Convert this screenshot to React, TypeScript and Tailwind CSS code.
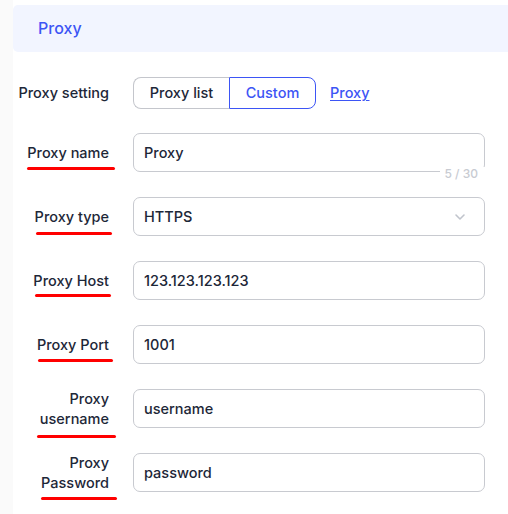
import React from "react";

const rows = [
  { label: ["Proxy name"], value: "Proxy", ul: { l: 27, w: 88, t: 34 }, counter: true },
  { label: ["Proxy type"], value: "HTTPS", ul: { l: 36, w: 76, t: 35 }, select: true },
  { label: ["Proxy Host"], value: "123.123.123.123", ul: { l: 35, w: 76, t: 33 } },
  { label: ["Proxy Port"], value: "1001", ul: { l: 38, w: 75, t: 34 } },
  { label: ["Proxy", "username"], value: "username", ul: { l: 37, w: 79, t: 46 } },
  { label: ["Proxy", "Password"], value: "password", ul: { l: 41, w: 76, t: 44 } },
];

export default function App() {
  return (
    <div
      className="w-[508px] h-[514px] bg-[#fafafa] pl-[13px] overflow-hidden text-[#1d2738]"
      style={{ fontFamily: "Inter, 'Noto Sans', sans-serif" }}
    >
      <div className="bg-white h-full pt-[5px]">
        <div className="h-[47px] rounded-l-[5px] bg-[#f2f5ff] pl-[25px] flex items-center pb-[1px] text-[16px] font-medium text-[#3d55f5]">
          Proxy
        </div>
        <div className="mt-[25px] flex items-center h-[32px]">
          <div className="w-[96px] text-right text-[14.5px] font-medium">Proxy setting</div>
          <div className="ml-[24px] flex h-[32px] text-[14.5px] font-medium">
            <div className="w-[96px] flex items-center justify-center border border-[#c4c6cc] border-r-0 rounded-l-[8px]">
              Proxy list
            </div>
            <div className="w-[87px] flex items-center justify-center border border-[#3d55f5] rounded-r-[8px] text-[#3d55f5]">
              Custom
            </div>
          </div>
          <a className="ml-[14px] text-[14.5px] font-medium text-[#3d55f5] underline underline-offset-2">Proxy</a>
        </div>
        <div className="mt-[24px] flex flex-col gap-[25px]">
          {rows.map((r, i) => (
            <div key={i} className="relative flex items-center h-[39px]">
              <div className="w-[96px] text-right text-[14.5px] font-medium leading-[20px]">
                {r.label.map((l, j) => (
                  <div key={j}>{l}</div>
                ))}
              </div>
              <div className="relative ml-[24px] w-[352px] h-[39px] border border-[#c8cad0] rounded-[7px] flex items-center pl-[10px] pr-[18px] text-[14.5px] font-medium">
                <span className="flex-1">{r.value}</span>
                {r.select && (
                  <svg width="12" height="8" viewBox="0 0 12 8">
                    <path d="M2 2 L6 6 L10 2" fill="none" stroke="#c0c4cc" strokeWidth="1.6" strokeLinecap="round" strokeLinejoin="round" />
                  </svg>
                )}
                {r.counter && (
                  <span className="absolute right-[-2px] bottom-[-10px] bg-white pl-[4px] pr-[8px] text-[12px] leading-[14px] font-medium text-[#c8cbd2]">
                    5 / 30
                  </span>
                )}
              </div>
              <span
                className="absolute h-[3px] bg-[#ff0000] rounded-full"
                style={{ left: r.ul.l - 13, width: r.ul.w, top: r.ul.t }}
              />
            </div>
          ))}
        </div>
      </div>
    </div>
  );
}
